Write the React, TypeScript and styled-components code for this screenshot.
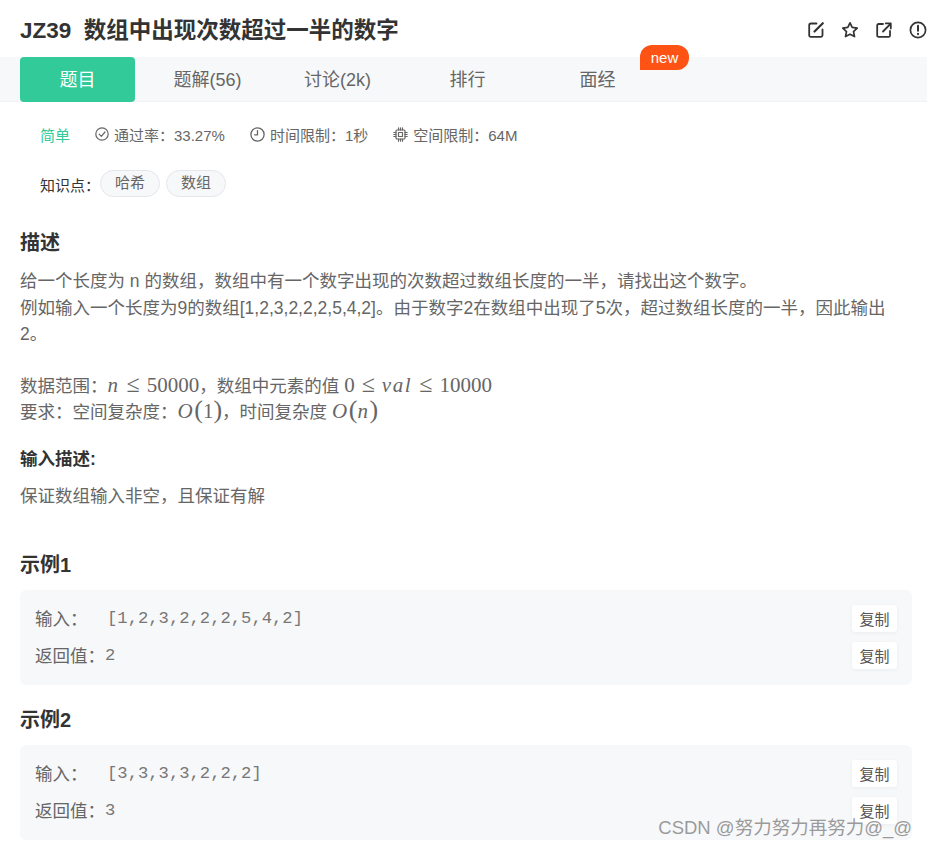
import React from "react";
import styled, { createGlobalStyle } from "styled-components";

const Global = createGlobalStyle`
  html, body { margin: 0; padding: 0; background: #fff; }
  body { font-family: "Liberation Sans", "Noto Sans CJK SC", sans-serif; color: #666; overflow: hidden; }
`;
const Page = styled.div`
  position: relative;
  width: 927px;
  height: 847px;
  overflow: hidden;
`;
const TitleRow = styled.div`
  height: 57px;
  padding: 0 0 1px 20px;
  box-sizing: border-box;
  display: flex;
  align-items: center;
  justify-content: space-between;
`;
const Title = styled.h1`
  margin: 0;
  font-size: 22.5px;
  font-weight: 700;
  color: #333;
  white-space: pre;
`;
const IconRow = styled.div`
  display: flex;
  gap: 16px;
  padding-top: 3px;
  color: #333;
  svg { display: block; }
`;
const TabBar = styled.div`
  height: 44px;
  background: #f7f8fa;
  border-bottom: 1px solid #f1f2f4;
  padding-left: 20px;
  display: flex;
  gap: 15px;
`;
const Tab = styled.div<{ $active?: boolean }>`
  position: relative;
  width: 115px;
  height: 45px;
  box-sizing: border-box;
  padding-bottom: 4px;
  display: flex;
  align-items: center;
  justify-content: center;
  font-size: 18px;
  border-radius: 4px;
  color: ${(p) => (p.$active ? "#fff" : "#666")};
  background: ${(p) => (p.$active ? "#32ca99" : "transparent")};
`;
const NewBadge = styled.span`
  position: absolute;
  left: 100px;
  top: -12px;
  width: 49px;
  height: 25px;
  line-height: 25px;
  text-align: center;
  font-size: 15px;
  color: #fff;
  background: #ff5316;
  border-radius: 12px 12px 12px 0;
`;
const Meta = styled.div`
  display: flex;
  align-items: center;
  height: 30px;
  margin-top: 17px;
  padding-left: 40px;
  font-size: 15px;
  color: #666;
`;
const Level = styled.span`
  color: #32ca99;
  margin-right: 25px;
`;
const MetaItem = styled.span`
  display: inline-flex;
  align-items: center;
  gap: 5px;
  margin-right: 25px;
`;
const TagRow = styled.div`
  display: flex;
  align-items: center;
  margin-top: 20px;
  padding-left: 40px;
  height: 28px;
  font-size: 15px;
  color: #333;
  gap: 6px;
`;
const TagLabel = styled.span`
  position: relative;
  top: 1px;
  width: 54px;
  white-space: nowrap;
`;
const Tag = styled.span`
  width: 60px;
  height: 27px;
  box-sizing: border-box;
  border: 1px solid #e4e6eb;
  border-radius: 14px;
  background: #f7f8fa;
  color: #666;
  display: flex;
  align-items: center;
  justify-content: center;
  padding-bottom: 3px;
`;
const Content = styled.div`
  padding: 0 15px 0 20px;
`;
const Heading = styled.h2<{ $top: number }>`
  margin: ${(p) => p.$top}px 0 0;
  font-size: 20px;
  line-height: 28px;
  font-weight: 700;
  color: #333;
`;
const Body = styled.div`
  margin-top: 11px;
  font-size: 17.5px;
  line-height: 26.5px;
  color: #666;
`;
const Gap = styled.div`
  height: 25px;
`;
const MathSpan = styled.span`
  font-family: "Liberation Serif", "DejaVu Serif", serif;
  font-size: 21px;
  line-height: 20px;
  color: #666;
  white-space: pre;
`;
const Var = styled.i`
  font-style: italic;
  letter-spacing: 1.6px;
`;
const Rel = styled.span`
  font-size: 24px;
  line-height: 20px;
  margin: 0 7px;
`;
const Paren = styled.span`
  font-size: 26px;
  line-height: 20px;
  font-weight: 300;
`;
const SubHeading = styled.h3`
  margin: 20px 0 0;
  font-size: 17.5px;
  line-height: 26px;
  font-weight: 700;
  color: #333;
`;
const Answer = styled.div`
  margin-top: 11px;
  font-size: 17.5px;
  line-height: 26px;
  color: #666;
`;
const Card = styled.div`
  margin-top: 11px;
  height: 95px;
  box-sizing: border-box;
  padding: 15px 15px 0;
  background: #f7f8fa;
  border-radius: 6px;
  display: flex;
  flex-direction: column;
  gap: 10px;
`;
const Line = styled.div`
  height: 27px;
  display: flex;
  align-items: center;
  font-size: 17.5px;
  color: #666;
`;
const Label = styled.span<{ $w: number }>`
  width: ${(p) => p.$w}px;
  flex: none;
  padding-bottom: 2px;
  white-space: nowrap;
`;
const Code = styled.span`
  flex: 1;
  font-family: "Liberation Mono", monospace;
  font-size: 17.2px;
  color: #777;
`;
const Copy = styled.button`
  width: 45px;
  height: 27px;
  padding: 0;
  border: 0;
  border-radius: 3px;
  background: #fff;
  box-shadow: 0 1px 4px rgba(0, 0, 0, 0.05);
  font-family: inherit;
  font-size: 15px;
  color: #555;
`;
const Watermark = styled.div`
  position: absolute;
  right: 15px;
  bottom: 7px;
  font-size: 18.5px;
  line-height: 24px;
  color: #9a9a9a;
  white-space: nowrap;
  text-shadow: 0 0 1px rgba(255, 255, 255, 0.6);
`;

const S = { fill: "none", stroke: "currentColor", strokeLinecap: "round", strokeLinejoin: "round" } as const;

const IconEdit = () => (
  <svg width="18" height="18" viewBox="0 0 18 18" {...S} strokeWidth="1.8">
    <path d="M9.5 2.5H4A1.8 1.8 0 0 0 2.2 4.3v10A1.5 1.5 0 0 0 3.7 15.8h10a1.8 1.8 0 0 0 1.8-1.8V8.5" />
    <path d="M7.5 10.5 15.8 2.2" strokeWidth="2.2" />
  </svg>
);
const IconStar = () => (
  <svg width="18" height="18" viewBox="0 0 18 18" {...S} strokeWidth="1.7">
    <path d="M9 1.8 11.2 6.4l5 .7-3.7 3.5 1 5L9 13.2l-4.5 2.4 1-5L1.8 7.1l5-.7Z" />
  </svg>
);
const IconShare = () => (
  <svg width="18" height="18" viewBox="0 0 18 18" {...S} strokeWidth="1.8">
    <path d="M8 3H3.6A1.4 1.4 0 0 0 2.2 4.4v10a1.4 1.4 0 0 0 1.4 1.4h10a1.4 1.4 0 0 0 1.4-1.4V10" />
    <path d="M8 10.5 15.5 2.8M10.8 2.4h5v5" />
  </svg>
);
const IconWarn = () => (
  <svg width="18" height="18" viewBox="0 0 18 18" {...S} strokeWidth="1.7">
    <circle cx="9" cy="9" r="7.6" />
    <path d="M9 4.8v5" strokeWidth="2" />
    <path d="M9 12.9v.2" strokeWidth="2.2" />
  </svg>
);
const IconCheck = () => (
  <svg width="14" height="14" viewBox="0 0 14 14" {...S} strokeWidth="1.2">
    <circle cx="7" cy="7" r="6.2" />
    <path d="M4.2 7.2 6.3 9.3 10 5" />
  </svg>
);
const IconClock = () => (
  <svg width="15" height="15" viewBox="0 0 15 15" {...S} strokeWidth="1.3">
    <circle cx="7.5" cy="7.5" r="6.6" />
    <path d="M7.5 3.6v4.2H4.6" />
  </svg>
);
const IconChip = () => (
  <svg width="15" height="15" viewBox="0 0 15 15" {...S} strokeWidth="1.2">
    <rect x="3" y="3" width="9" height="9" rx="1" />
    <rect x="5.5" y="5.5" width="4" height="4" />
    <path d="M5.5 .8V3M7.5 .8V3M9.5 .8V3M5.5 12v2.2M7.5 12v2.2M9.5 12v2.2M.8 5.5H3M.8 7.5H3M.8 9.5H3M12 5.5h2.2M12 7.5h2.2M12 9.5h2.2" />
  </svg>
);

function Example({ input, output }: { input: string; output: string }) {
  return (
    <Card>
      <Line>
        <Label $w={72}>输入：</Label>
        <Code>{input}</Code>
        <Copy>复制</Copy>
      </Line>
      <Line>
        <Label $w={70}>返回值：</Label>
        <Code>{output}</Code>
        <Copy>复制</Copy>
      </Line>
    </Card>
  );
}

export default function App() {
  return (
    <Page>
      <Global />
      <TitleRow>
        <Title>JZ39  数组中出现次数超过一半的数字</Title>
        <IconRow>
          <IconEdit />
          <IconStar />
          <IconShare />
          <IconWarn />
        </IconRow>
      </TitleRow>
      <TabBar>
        <Tab $active>题目</Tab>
        <Tab>题解(56)</Tab>
        <Tab>讨论(2k)</Tab>
        <Tab>排行</Tab>
        <Tab>
          面经
          <NewBadge>new</NewBadge>
        </Tab>
      </TabBar>
      <Meta>
        <Level>简单</Level>
        <MetaItem><IconCheck />通过率：33.27%</MetaItem>
        <MetaItem><IconClock />时间限制：1秒</MetaItem>
        <MetaItem><IconChip />空间限制：64M</MetaItem>
      </Meta>
      <TagRow>
        <TagLabel>知识点：</TagLabel>
        <Tag>哈希</Tag>
        <Tag>数组</Tag>
      </TagRow>
      <Content>
        <Heading $top={32}>描述</Heading>
        <Body>
          给一个长度为 n 的数组，数组中有一个数字出现的次数超过数组长度的一半，请找出这个数字。
          <br />
          例如输入一个长度为9的数组[1,2,3,2,2,2,5,4,2]。由于数字2在数组中出现了5次，超过数组长度的一半，因此输出2。
          <Gap />
          数据范围：<MathSpan><Var>n</Var><Rel>≤</Rel>50000</MathSpan>，数组中元素的值 <MathSpan>0<Rel>≤</Rel><Var>val</Var><Rel>≤</Rel>10000</MathSpan>
          <br />
          要求：空间复杂度：<MathSpan><Var>O</Var><Paren>(</Paren>1<Paren>)</Paren></MathSpan>，时间复杂度 <MathSpan><Var>O</Var><Paren>(</Paren><Var>n</Var><Paren>)</Paren></MathSpan>
        </Body>
        <SubHeading>输入描述:</SubHeading>
        <Answer>保证数组输入非空，且保证有解</Answer>
        <Heading $top={42}>示例1</Heading>
        <Example input="[1,2,3,2,2,2,5,4,2]" output="2" />
        <Heading $top={21}>示例2</Heading>
        <Example input="[3,3,3,3,2,2,2]" output="3" />
      </Content>
      <Watermark>CSDN @努力努力再努力@_@</Watermark>
    </Page>
  );
}
